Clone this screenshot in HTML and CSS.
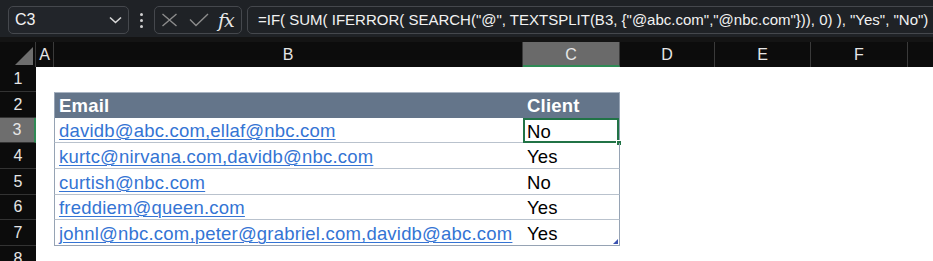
FILE: index.html
```html
<!DOCTYPE html>
<html>
<head>
<meta charset="utf-8">
<link rel="stylesheet" href="styles.css">
</head>
<body>
<div class="toolbar">
  <div class="namebox"><span class="nb-text">C3</span>
    <svg class="chev" width="13" height="8" viewBox="0 0 13 8"><path d="M1 1.5 L6.5 6.5 L12 1.5" fill="none" stroke="#d8d8d8" stroke-width="1.6"/></svg>
  </div>
  <div class="kebab"><i></i><i></i><i></i></div>
  <div class="fxbox">
    <svg width="17" height="14" viewBox="0 0 17 14"><path d="M1.5 1 L15.5 13 M15.5 1 L1.5 13" stroke="#8c8c8c" stroke-width="1.4" fill="none"/></svg>
    <svg width="20" height="14" viewBox="0 0 20 14"><path d="M1 6.5 L7 12.5 L19 1" stroke="#8c8c8c" stroke-width="1.4" fill="none"/></svg>
    <span class="fx">fx</span>
  </div>
  <div class="formula">=IF( SUM( IFERROR( SEARCH("@", TEXTSPLIT(B3, {"@abc.com","@nbc.com"})), 0) ), "Yes", "No")</div>
</div>
<div class="strip"></div>
<div class="sheet">
  <div class="row colhead">
    <div class="corner"><span class="tri"></span></div>
    <div class="ch">A</div><div class="ch">B</div><div class="ch sel">C</div><div class="ch">D</div><div class="ch">E</div><div class="ch">F</div><div class="ch last"></div>
  </div>
  <div class="row r25">
    <div class="rh">1</div><div></div><div></div><div></div><div></div><div></div><div></div><div></div>
  </div>
  <div class="row r26">
    <div class="rh">2</div><div></div><div class="tc tb thead first">Email</div><div class="tc tc2 thead">Client</div><div></div><div></div><div></div><div></div>
  </div>
  <div class="row r25">
    <div class="rh rsel">3</div><div></div><div class="tc tb"><span class="link">davidb@abc.com,ellaf@nbc.com</span></div><div class="tc tc2 active">No<span class="handle"></span></div><div></div><div></div><div></div><div></div>
  </div>
  <div class="row r26">
    <div class="rh">4</div><div></div><div class="tc tb"><span class="link">kurtc@nirvana.com,davidb@nbc.com</span></div><div class="tc tc2">Yes</div><div></div><div></div><div></div><div></div>
  </div>
  <div class="row r26">
    <div class="rh">5</div><div></div><div class="tc tb"><span class="link">curtish@nbc.com</span></div><div class="tc tc2">No</div><div></div><div></div><div></div><div></div>
  </div>
  <div class="row r25">
    <div class="rh">6</div><div></div><div class="tc tb"><span class="link">freddiem@queen.com</span></div><div class="tc tc2">Yes</div><div></div><div></div><div></div><div></div>
  </div>
  <div class="row r26">
    <div class="rh">7</div><div></div><div class="tc tb lastrow"><span class="link">johnl@nbc.com,peter@grabriel.com,davidb@abc.com</span></div><div class="tc tc2 lastrow">Yes<span class="resize"></span></div><div></div><div></div><div></div><div></div>
  </div>
  <div class="row r26">
    <div class="rh">8</div><div></div><div></div><div></div><div></div><div></div><div></div><div></div>
  </div>
</div>
</body>
</html>
```
FILE: styles.css
```css
html, body { margin: 0; padding: 0; background: #ffffff; overflow: hidden; }
body { width: 933px; height: 261px; font-family: "Liberation Sans", Arial, sans-serif; }

.toolbar {
  height: 37px; background: #1f2226; display: flex; align-items: flex-start;
  padding: 6px 0 0 8px; box-sizing: border-box; overflow: hidden; white-space: nowrap;
}
.toolbar > * { flex-shrink: 0; }
.namebox {
  width: 121px; height: 28px; box-sizing: border-box; border: 1px solid #45484d; border-radius: 5px;
  background: #22252a; display: flex; align-items: center; justify-content: space-between; padding: 0 6px 0 6px;
}
.nb-text { color: #f2f2f2; font-size: 16px; }
.kebab { width: 25px; display: flex; flex-direction: column; align-items: center; gap: 3px; padding-top: 7px; }
.kebab i { width: 3px; height: 3px; background: #d0d0d0; border-radius: 50%; display: block; }
.fxbox {
  width: 88px; height: 28px; box-sizing: border-box; border: 1px solid #45484d; border-radius: 5px;
  display: flex; align-items: center; padding-left: 6px; gap: 11px; margin-right: 5px;
}
.fx { font-family: "DejaVu Serif", "Liberation Serif", serif; font-style: italic; color: #e8e8e8; font-size: 19px; margin-left: -2px; letter-spacing: -1px; }
.formula {
  width: 760px; height: 28px; box-sizing: border-box; border: 1px solid #45484d; border-radius: 5px;
  color: #f2f2f2; font-size: 15px; line-height: 26px; padding-left: 10px;
}
.strip { height: 5px; background: #141414; }

.sheet { display: flex; flex-direction: column; }
.row { display: grid; grid-template-columns: 36px 18px 469px 97px 95px 96px 97px 1fr; }
.r25 { height: 25px; }
.r26 { height: 26px; }
.colhead { height: 25px; background: #0c0c0c; }
.corner { border-right: 1px solid #3a3a3a; position: relative; }
.tri { position: absolute; left: 15px; top: 5px; width: 0; height: 0; border-left: 18px solid transparent; border-bottom: 18px solid #6e6e6e; }
.ch { color: #e6e6e6; font-size: 16px; display: flex; align-items: center; justify-content: center; border-right: 1px solid #3a3a3a; }
.ch.sel { background: #6a6a6a; border-bottom: 2px solid #2f8a55; box-sizing: border-box; padding-top: 2px; }
.ch.last { border-right: none; }
.rh { background: #0c0c0c; color: #e6e6e6; font-size: 16px; display: flex; align-items: center; justify-content: center; border-bottom: 1px solid #333; box-sizing: border-box; }
.rh.rsel { background: #6e6e6e; border-right: 2px solid #2f8a55; }

.tc { display: flex; align-items: flex-end; padding: 0 0 0 4px; box-sizing: border-box; font-size: 18.5px; letter-spacing: 0.2px; color: #000; border-bottom: 1px solid #b9c2cd; white-space: nowrap; position: relative; }
.tb { border-left: 1px solid #96a3b4; }
.tc2 { border-right: 1px solid #96a3b4; }
.thead { background: #64758a; color: #ffffff; font-weight: bold; border-bottom: none; border-top: 1px solid #a9b4c2; padding-bottom: 1px; }
.lastrow { border-bottom: 1px solid #96a3b4; }
.link { color: #3474d4; text-decoration: underline; text-underline-offset: 2px; text-decoration-thickness: 1px; }
.active { box-shadow: inset 0 0 0 2px #217346; border-bottom: none; }
.handle { position: absolute; right: -3px; bottom: -3px; width: 6px; height: 6px; background: #217346; border: 1px solid #fff; box-sizing: border-box; }
.resize { position: absolute; right: 1px; bottom: 1px; width: 0; height: 0; border-left: 5px solid transparent; border-bottom: 5px solid #3b52b0; }
```
